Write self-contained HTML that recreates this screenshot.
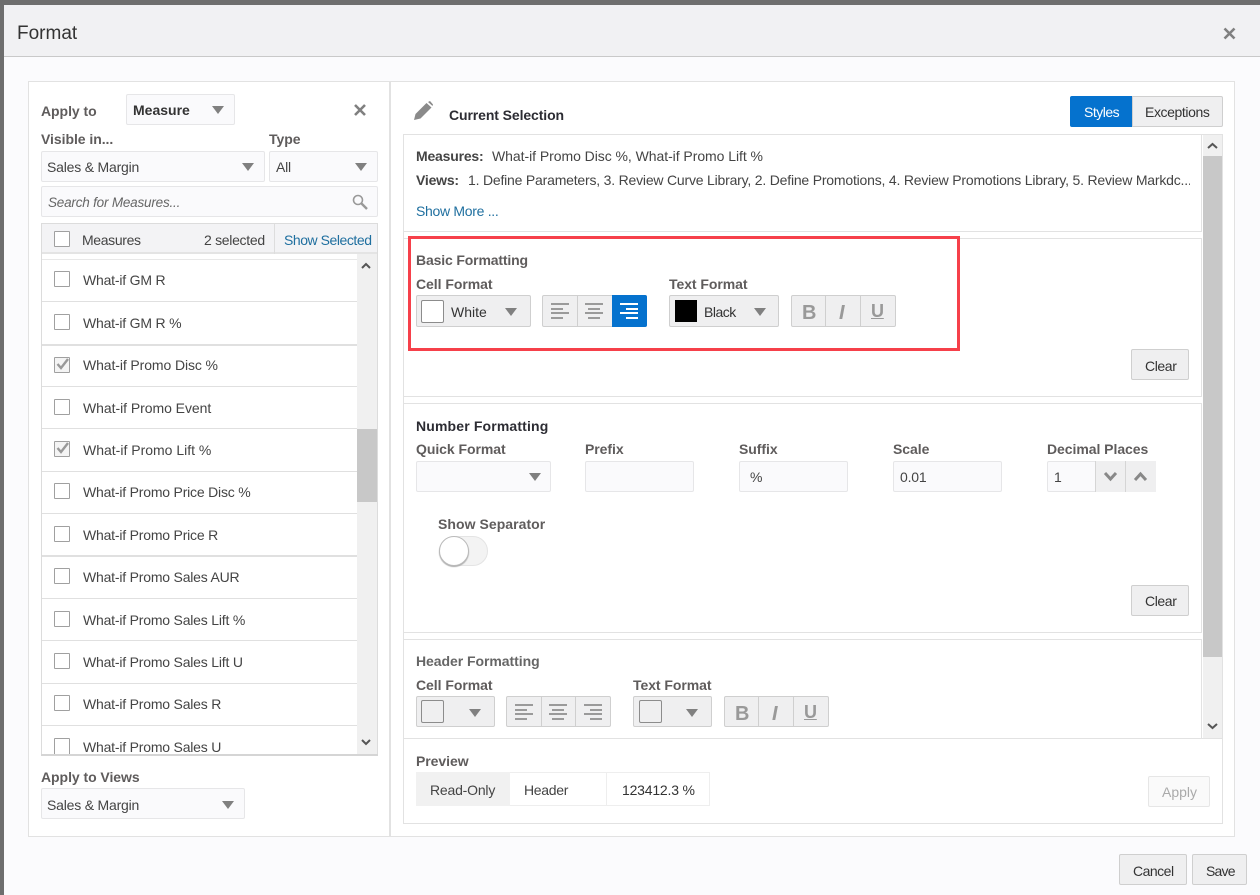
<!DOCTYPE html>
<html><head><meta charset="utf-8"><style>
html,body{margin:0;padding:0;width:1260px;height:895px;overflow:hidden;background:#fbfbfd;font-family:"Liberation Sans",sans-serif;font-size:14px;color:#444;letter-spacing:-.2px}
div,span,svg{position:absolute;box-sizing:border-box}
.t{white-space:nowrap;line-height:20px;height:20px}
.b{font-weight:bold;color:#5f5c5c;letter-spacing:-.05px}
.d{font-weight:bold;color:#2c2c33;letter-spacing:-.1px}
.box{background:#fff;border:1px solid #e2e2e2}
.inp{background:#fafafc;border:1px solid #e6e6e8;border-radius:2px}
.btn{background:#efeff0;border:1px solid #cfcfcf;border-radius:2px}
.tri{width:0;height:0;border-left:6px solid transparent;border-right:6px solid transparent;border-top:8px solid #808080}
.cb{width:16px;height:16px;border:1px solid #a0a0a0;background:#fff;border-radius:1px}
.ln{left:42px;width:315px;height:1px;background:#e0e0e0}
.sep{width:1px;background:#cfcfcf}
</style></head><body>
<div style="left:0;top:0;width:1260px;height:5px;background:#6e6e6e"></div>
<div style="left:0;top:0;width:4px;height:895px;background:#6e6e6e"></div>
<div style="left:4px;top:5px;width:1256px;height:52px;background:#f1f1f3;border-bottom:1px solid #c9c9c9"></div>
<div class="t" style="left:17px;top:24px;font-size:19px;color:#333;letter-spacing:0">Format</div>
<svg style="left:1223px;top:27px" width="13" height="13" viewBox="0 0 13 13"><path d="M1.5 1.5L11.5 11.5M11.5 1.5L1.5 11.5" stroke="#808080" stroke-width="2.6"/></svg>

<div style="left:28px;top:81px;width:1207px;height:756px;background:#fff;border:1px solid #e2e2e2"></div>
<div style="left:389px;top:81px;width:2px;height:756px;background:#e2e2e2"></div>

<div class="t b" style="left:41px;top:101px">Apply to</div>
<div class="inp" style="left:126px;top:94px;width:109px;height:31px"></div>
<div class="t" style="left:133px;top:100px;font-weight:bold;color:#333;letter-spacing:0">Measure</div>
<div class="tri" style="left:212px;top:106px"></div>
<svg style="left:354px;top:104px" width="12" height="12" viewBox="0 0 12 12"><path d="M1 1L11 11M11 1L1 11" stroke="#808080" stroke-width="2.6"/></svg>
<div class="t b" style="left:41px;top:129px">Visible in...</div>
<div class="t b" style="left:269px;top:129px">Type</div>
<div class="inp" style="left:41px;top:151px;width:224px;height:31px"></div>
<div class="t" style="left:47px;top:157px">Sales &amp; Margin</div>
<div class="tri" style="left:242px;top:163px"></div>
<div class="inp" style="left:269px;top:151px;width:109px;height:31px"></div>
<div class="t" style="left:276px;top:157px">All</div>
<div class="tri" style="left:355px;top:163px"></div>
<div class="inp" style="left:41px;top:186px;width:337px;height:31px"></div>
<div class="t" style="left:48px;top:193px;font-style:italic;color:#666;font-size:13.5px">Search for Measures...</div>
<svg style="left:352px;top:194px" width="16" height="16" viewBox="0 0 16 16"><circle cx="6" cy="6" r="4.5" fill="none" stroke="#999" stroke-width="1.6"/><path d="M9.5 9.5L15 15" stroke="#999" stroke-width="2.4"/></svg>

<div style="left:41px;top:223px;width:337px;height:533px;border:1px solid #dcdcdc;background:#fff"></div>
<div style="left:42px;top:224px;width:335px;height:30px;background:#f3f3f5;border-bottom:2px solid #e4e4e4"></div>
<div class="sep" style="left:274px;top:224px;height:30px;background:#ddd"></div>
<div class="cb" style="left:54px;top:231px"></div>
<div class="t" style="left:82px;top:230px;letter-spacing:-.35px">Measures</div>
<div class="t" style="left:204px;top:230px;letter-spacing:-.3px">2 selected</div>
<div class="t" style="left:284px;top:230px;color:#1f6f9f;letter-spacing:-.45px">Show Selected</div>
<div style="left:42px;top:259px;width:315px;height:1px;background:#e8e8e8"></div>
<div style="left:357px;top:254px;width:20px;height:501px;background:#f0f0f0"></div>
<div style="left:357px;top:429px;width:20px;height:73px;background:#c8c8c8"></div>
<svg style="left:360px;top:261px" width="12" height="9" viewBox="0 0 12 9"><path d="M2 7L6 3L10 7" fill="none" stroke="#555" stroke-width="2"/></svg>
<svg style="left:360px;top:738px" width="12" height="9" viewBox="0 0 12 9"><path d="M2 2L6 6L10 2" fill="none" stroke="#555" stroke-width="2"/></svg>

<div class="cb" style="left:54px;top:271px"></div><div class="t" style="left:83px;top:270px">What-if GM R</div><div class="ln" style="top:301px"></div>
<div class="cb" style="left:54px;top:314px"></div><div class="t" style="left:83px;top:313px">What-if GM R %</div><div class="ln" style="top:344px;height:2px"></div>
<div class="cb" style="left:54px;top:357px;background:#f4f4f4"></div><svg style="left:55px;top:357px" width="15" height="14" viewBox="0 0 15 14"><path d="M2.5 7L6 11L13 2" fill="none" stroke="#999" stroke-width="2.4"/></svg><div class="t" style="left:83px;top:355px;letter-spacing:-.1px">What-if Promo Disc %</div><div class="ln" style="top:386px"></div>
<div class="cb" style="left:54px;top:399px"></div><div class="t" style="left:83px;top:398px;letter-spacing:-.05px">What-if Promo Event</div><div class="ln" style="top:428px"></div>
<div class="cb" style="left:54px;top:441px;background:#f4f4f4"></div><svg style="left:55px;top:441px" width="15" height="14" viewBox="0 0 15 14"><path d="M2.5 7L6 11L13 2" fill="none" stroke="#999" stroke-width="2.4"/></svg><div class="t" style="left:83px;top:440px;letter-spacing:0">What-if Promo Lift %</div><div class="ln" style="top:471px"></div>
<div class="cb" style="left:54px;top:483px"></div><div class="t" style="left:83px;top:482px">What-if Promo Price Disc %</div><div class="ln" style="top:513px"></div>
<div class="cb" style="left:54px;top:526px"></div><div class="t" style="left:83px;top:525px">What-if Promo Price R</div><div class="ln" style="top:555px;height:2px"></div>
<div class="cb" style="left:54px;top:568px"></div><div class="t" style="left:83px;top:567px">What-if Promo Sales AUR</div><div class="ln" style="top:598px"></div>
<div class="cb" style="left:54px;top:611px"></div><div class="t" style="left:83px;top:610px">What-if Promo Sales Lift %</div><div class="ln" style="top:640px"></div>
<div class="cb" style="left:54px;top:653px"></div><div class="t" style="left:83px;top:652px">What-if Promo Sales Lift U</div><div class="ln" style="top:683px"></div>
<div class="cb" style="left:54px;top:695px"></div><div class="t" style="left:83px;top:694px">What-if Promo Sales R</div><div class="ln" style="top:725px"></div>
<div class="cb" style="left:54px;top:738px;height:17px"></div><div class="t" style="left:83px;top:737px">What-if Promo Sales U</div>
<div style="left:41px;top:754px;width:337px;height:2px;background:#d5d5d5"></div>

<div class="t b" style="left:41px;top:767px">Apply to Views</div>
<div class="inp" style="left:41px;top:788px;width:204px;height:31px"></div>
<div class="t" style="left:47px;top:795px">Sales &amp; Margin</div>
<div class="tri" style="left:222px;top:801px"></div>

<svg style="left:413px;top:101px" width="21" height="20" viewBox="0 0 21 20"><path d="M1 19L2.5 13L13.5 2L18.5 6.5L7.5 17.5Z" fill="#8a8a8a"/><path d="M15 1L17 0L20 3.5L19.5 5Z" fill="#8a8a8a"/></svg>
<div class="t d" style="left:449px;top:105px">Current Selection</div>
<div style="left:1070px;top:96px;width:62px;height:31px;background:#0572ce;border-radius:2px 0 0 2px"></div>
<div class="t" style="left:1084px;top:102px;color:#fff;letter-spacing:-.5px">Styles</div>
<div class="btn" style="left:1132px;top:96px;width:91px;height:31px;border-radius:0 2px 2px 0"></div>
<div class="t" style="left:1145px;top:102px;color:#333;letter-spacing:-.4px">Exceptions</div>

<div style="left:403px;top:134px;width:820px;height:605px;border:1px solid #e2e2e2;border-bottom:0"></div>
<div style="left:1203px;top:135px;width:19px;height:603px;background:#f0f0f0"></div>
<div style="left:1203px;top:156px;width:19px;height:501px;background:#c8c8c8"></div>
<svg style="left:1206px;top:141px" width="13" height="9" viewBox="0 0 13 9"><path d="M2 7L6.5 3L11 7" fill="none" stroke="#555" stroke-width="2"/></svg>
<svg style="left:1206px;top:722px" width="13" height="9" viewBox="0 0 13 9"><path d="M2 2L6.5 6L11 2" fill="none" stroke="#555" stroke-width="2"/></svg>

<div class="box" style="left:403px;top:134px;width:799px;height:98px"></div>
<div class="t d" style="left:416px;top:146px;color:#444;letter-spacing:-.2px">Measures:</div>
<div class="t" style="left:492px;top:146px;letter-spacing:-.05px">What-if Promo Disc %, What-if Promo Lift %</div>
<div class="t d" style="left:416px;top:170px;color:#444;letter-spacing:-.2px">Views:</div>
<div class="t" style="left:468px;top:170px;width:722px;overflow:hidden">1. Define Parameters, 3. Review Curve Library, 2. Define Promotions, 4. Review Promotions Library, 5. Review Markdc...</div>
<div class="t" style="left:416px;top:201px;color:#1f6f9f;letter-spacing:-.3px">Show More ...</div>

<div class="box" style="left:403px;top:238px;width:799px;height:159px"></div>
<div class="t b" style="left:416px;top:250px;letter-spacing:-.15px">Basic Formatting</div>
<div class="t b" style="left:416px;top:274px">Cell Format</div>
<div class="t b" style="left:669px;top:274px">Text Format</div>
<div class="btn" style="left:416px;top:295px;width:115px;height:32px"></div>
<div style="left:421px;top:300px;width:23px;height:23px;background:#fff;border:1px solid #8c8c8c;border-radius:2px"></div>
<div class="t" style="left:451px;top:302px;color:#333;letter-spacing:0">White</div>
<div class="tri" style="left:505px;top:308px"></div>
<div class="btn" style="left:542px;top:295px;width:105px;height:32px"></div>
<div class="sep" style="left:577px;top:296px;height:30px"></div>
<svg style="left:551px;top:303px" width="18" height="16" viewBox="0 0 18 16"><path d="M0 1H18M0 6H12M0 10H18M0 15H12" stroke="#9a9a9a" stroke-width="2"/></svg>
<svg style="left:585px;top:303px" width="18" height="16" viewBox="0 0 18 16"><path d="M0 1H18M3 6H15M0 10H18M3 15H15" stroke="#9a9a9a" stroke-width="2"/></svg>
<div style="left:612px;top:295px;width:35px;height:32px;background:#0572ce;border-radius:0 2px 2px 0"></div>
<svg style="left:620px;top:303px" width="18" height="16" viewBox="0 0 18 16"><path d="M0 1H18M6 6H18M0 10H18M6 15H18" stroke="#fff" stroke-width="2"/></svg>
<div class="btn" style="left:669px;top:295px;width:110px;height:32px"></div>
<div style="left:675px;top:300px;width:22px;height:22px;background:#000"></div>
<div class="t" style="left:704px;top:302px;color:#333;letter-spacing:-.5px">Black</div>
<div class="tri" style="left:754px;top:308px"></div>
<div class="btn" style="left:791px;top:295px;width:105px;height:32px"></div>
<div class="sep" style="left:825px;top:296px;height:30px"></div>
<div class="sep" style="left:860px;top:296px;height:30px"></div>
<div class="t" style="left:802px;top:303px;font-weight:bold;font-size:20px;color:#999">B</div>
<div class="t" style="left:839px;top:303px;font-weight:bold;font-style:italic;font-size:20px;color:#999">I</div>
<div class="t" style="left:871px;top:301px;font-weight:bold;font-size:18px;color:#999;text-decoration:underline">U</div>
<div class="btn" style="left:1131px;top:349px;width:58px;height:31px"></div>
<div class="t" style="left:1145px;top:356px;color:#333;letter-spacing:-.4px">Clear</div>

<div style="left:408px;top:236px;width:552px;height:115px;border:3px solid #f6404a"></div>

<div class="box" style="left:403px;top:403px;width:799px;height:230px"></div>
<div class="t d" style="left:416px;top:416px;letter-spacing:.15px">Number Formatting</div>
<div class="t b" style="left:416px;top:439px">Quick Format</div>
<div class="t b" style="left:585px;top:439px">Prefix</div>
<div class="t b" style="left:739px;top:439px">Suffix</div>
<div class="t b" style="left:893px;top:439px">Scale</div>
<div class="t b" style="left:1047px;top:439px">Decimal Places</div>
<div class="inp" style="left:416px;top:461px;width:135px;height:31px"></div>
<div class="tri" style="left:529px;top:473px"></div>
<div class="inp" style="left:585px;top:461px;width:109px;height:31px"></div>
<div class="inp" style="left:739px;top:461px;width:109px;height:31px"></div>
<div class="t" style="left:750px;top:467px">%</div>
<div class="inp" style="left:893px;top:461px;width:109px;height:31px"></div>
<div class="t" style="left:900px;top:467px">0.01</div>
<div class="inp" style="left:1047px;top:461px;width:109px;height:31px"></div>
<div class="t" style="left:1054px;top:467px">1</div>
<div style="left:1095px;top:461px;width:61px;height:31px;background:#efeff0;border-left:1px solid #d5d5d5"></div>
<div class="sep" style="left:1125px;top:461px;height:31px;background:#d5d5d5"></div>
<svg style="left:1103px;top:471px" width="15" height="11" viewBox="0 0 15 11"><path d="M2 2L7.5 8L13 2" fill="none" stroke="#888" stroke-width="3"/></svg>
<svg style="left:1133px;top:471px" width="15" height="11" viewBox="0 0 15 11"><path d="M2 9L7.5 3L13 9" fill="none" stroke="#888" stroke-width="3"/></svg>
<div class="t b" style="left:438px;top:514px;letter-spacing:.05px">Show Separator</div>
<div style="left:439px;top:536px;width:49px;height:30px;background:#f3f3f3;border:1px solid #e4e4e4;border-radius:15px"></div>
<div style="left:439px;top:536px;width:30px;height:30px;background:#fff;border:1px solid #bbb;border-radius:50%;box-shadow:0 1px 1px #aaa"></div>
<div class="btn" style="left:1131px;top:585px;width:58px;height:31px"></div>
<div class="t" style="left:1145px;top:591px;color:#333;letter-spacing:-.4px">Clear</div>

<div class="box" style="left:403px;top:639px;width:799px;height:100px"></div>
<div class="t b" style="left:416px;top:651px;color:#666">Header Formatting</div>
<div class="t b" style="left:416px;top:675px">Cell Format</div>
<div class="t b" style="left:633px;top:675px">Text Format</div>
<div class="btn" style="left:416px;top:696px;width:79px;height:31px"></div>
<div style="left:421px;top:700px;width:23px;height:23px;border:1px solid #8c8c8c;border-radius:2px"></div>
<div class="tri" style="left:469px;top:709px"></div>
<div class="btn" style="left:506px;top:696px;width:105px;height:31px"></div>
<div class="sep" style="left:541px;top:697px;height:29px"></div>
<div class="sep" style="left:575px;top:697px;height:29px"></div>
<svg style="left:515px;top:704px" width="18" height="16" viewBox="0 0 18 16"><path d="M0 1H18M0 6H12M0 10H18M0 15H12" stroke="#9a9a9a" stroke-width="2"/></svg>
<svg style="left:549px;top:704px" width="18" height="16" viewBox="0 0 18 16"><path d="M0 1H18M3 6H15M0 10H18M3 15H15" stroke="#9a9a9a" stroke-width="2"/></svg>
<svg style="left:584px;top:704px" width="18" height="16" viewBox="0 0 18 16"><path d="M0 1H18M6 6H18M0 10H18M6 15H18" stroke="#9a9a9a" stroke-width="2"/></svg>
<div class="btn" style="left:633px;top:696px;width:79px;height:31px"></div>
<div style="left:639px;top:700px;width:23px;height:23px;border:1px solid #8c8c8c;border-radius:2px"></div>
<div class="tri" style="left:686px;top:709px"></div>
<div class="btn" style="left:724px;top:696px;width:105px;height:31px"></div>
<div class="sep" style="left:758px;top:697px;height:29px"></div>
<div class="sep" style="left:793px;top:697px;height:29px"></div>
<div class="t" style="left:735px;top:704px;font-weight:bold;font-size:20px;color:#999">B</div>
<div class="t" style="left:772px;top:704px;font-weight:bold;font-style:italic;font-size:20px;color:#999">I</div>
<div class="t" style="left:804px;top:702px;font-weight:bold;font-size:18px;color:#999;text-decoration:underline">U</div>

<div style="left:403px;top:738px;width:820px;height:86px;background:#fff;border:1px solid #e2e2e2"></div>
<div class="t b" style="left:416px;top:751px">Preview</div>
<div style="left:416px;top:772px;width:294px;height:34px;border:1px solid #eee;background:#fff"></div>
<div style="left:416px;top:772px;width:94px;height:34px;background:#f1f1f1"></div>
<div class="sep" style="left:606px;top:772px;height:34px;background:#eee"></div>
<div class="t" style="left:430px;top:780px">Read-Only</div>
<div class="t" style="left:524px;top:780px;letter-spacing:-.3px">Header</div>
<div class="t" style="left:622px;top:780px;color:#333">123412.3 %</div>
<div style="left:1148px;top:776px;width:62px;height:31px;background:#fafafa;border:1px solid #e6e6e6;border-radius:2px"></div>
<div class="t" style="left:1162px;top:782px;color:#aaa;letter-spacing:0">Apply</div>

<div class="btn" style="left:1119px;top:854px;width:68px;height:31px"></div>
<div class="t" style="left:1133px;top:861px;color:#333;letter-spacing:-.5px">Cancel</div>
<div class="btn" style="left:1192px;top:854px;width:55px;height:31px"></div>
<div class="t" style="left:1206px;top:861px;color:#333;letter-spacing:-.8px">Save</div>
</body></html>
